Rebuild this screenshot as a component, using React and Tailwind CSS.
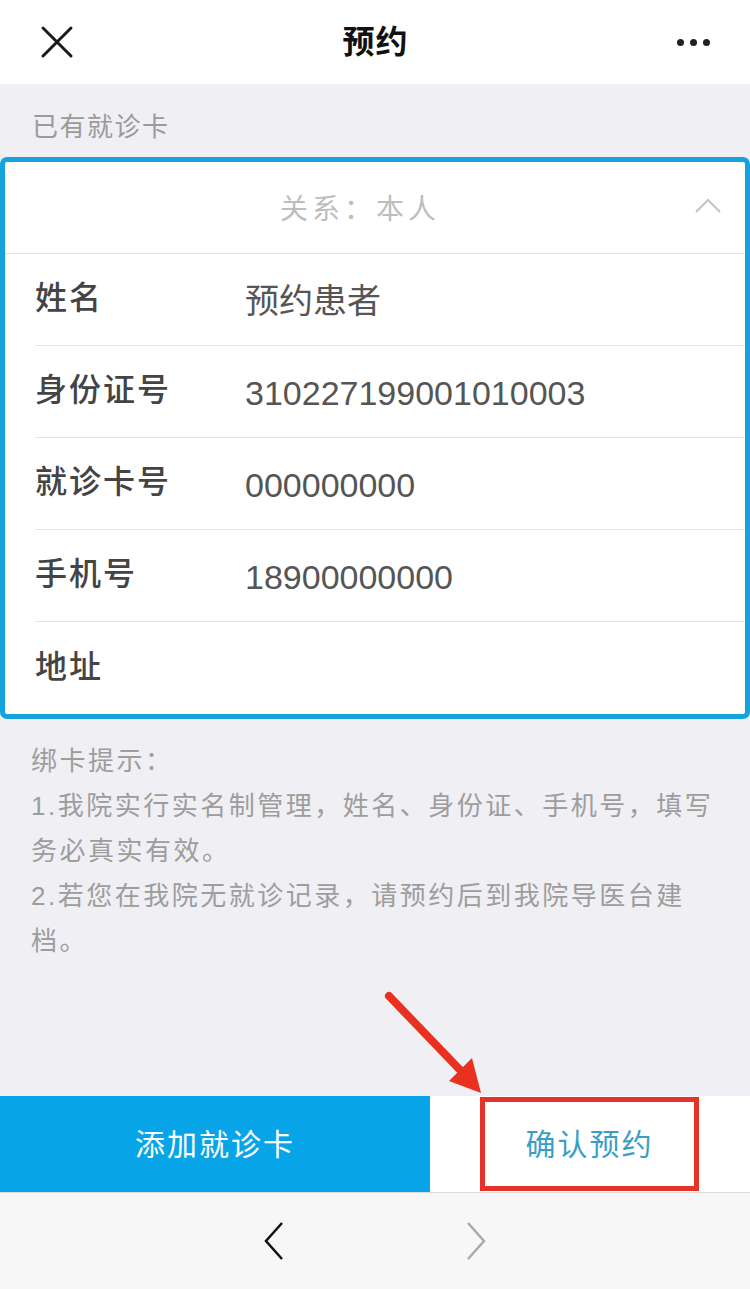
import React from "react";

const rows = [
  ["姓名", "预约患者"],
  ["身份证号", "310227199001010003"],
  ["就诊卡号", "000000000"],
  ["手机号", "18900000000"],
  ["地址", ""],
];

export default function App() {
  const font = { fontFamily: '"Liberation Sans", "Noto Sans CJK SC", sans-serif' };
  return (
    <div className="relative w-[750px] h-[1289px] flex flex-col bg-[#efeff4] overflow-hidden" style={font}>
      {/* header */}
      <div className="h-[84px] bg-white flex items-center justify-between px-[40px] shrink-0">
        <svg width="34" height="34" viewBox="0 0 34 34">
          <path d="M3 3 L31 31 M31 3 L3 31" stroke="#1a1a1a" strokeWidth="3" strokeLinecap="round" />
        </svg>
        <div className="text-[32px] font-bold text-[#111] tracking-[1px]">预约</div>
        <div className="flex gap-[6px] items-center">
          <span className="w-[7px] h-[7px] rounded-full bg-[#222]"></span>
          <span className="w-[7px] h-[7px] rounded-full bg-[#222]"></span>
          <span className="w-[7px] h-[7px] rounded-full bg-[#222]"></span>
        </div>
      </div>
      {/* label */}
      <div className="h-[73px] flex items-center px-[32px] pt-[14px] text-[26px] tracking-[1.5px] text-[#9a9a9a] shrink-0">已有就诊卡</div>
      {/* card */}
      <div className="border-[5px] border-[#16a3dc] rounded-[7px] bg-white shrink-0">
        <div className="h-[92px] relative flex items-center justify-center border-b border-[#e3e3e3]">
          <span className="text-[28px] tracking-[4px] text-[#bdbdbd] mr-[30px] mt-[5px]">关系：本人</span>
          <svg className="absolute right-[23px] top-[36px]" width="28" height="16" viewBox="0 0 28 16">
            <path d="M2 14 L14 2 L26 14" stroke="#c4c4c4" strokeWidth="2" fill="none" />
          </svg>
        </div>
        <div className="pl-[30px]">
          {rows.map(([k, v], i) => (
            <div
              key={k}
              className={`h-[92px] flex items-center ${i < rows.length - 1 ? "border-b border-[#e3e3e3]" : ""}`}
            >
              <div className="w-[210px] text-[32px] tracking-[2px] text-[#444] font-medium -mt-[3px]">{k}</div>
              <div className="text-[34px] text-[#555] mt-[4px]">{v}</div>
            </div>
          ))}
        </div>
      </div>
      {/* notes */}
      <div className="px-[31px] pt-[20px] text-[26px] tracking-[2.5px] leading-[45px] text-[#9d9d9d]">
        <div>绑卡提示：</div>
        <div>1.我院实行实名制管理，姓名、身份证、手机号，填写务必真实有效。</div>
        <div>2.若您在我院无就诊记录，请预约后到我院导医台建档。</div>
      </div>
      <div className="flex-1"></div>
      {/* bottom buttons */}
      <div className="h-[96px] flex shrink-0">
        <div className="w-[430px] bg-[#07a5e8] flex items-center justify-center text-[30px] tracking-[2px] text-white">添加就诊卡</div>
        <div className="flex-1 bg-white flex items-center">
          <div className="ml-[50px] w-[219px] h-[94px] border-[5px] border-[#e5332a] flex items-center justify-center text-[30px] tracking-[2px] text-[#3a9fc4]">
            确认预约
          </div>
        </div>
      </div>
      {/* bottom nav */}
      <div className="h-[97px] bg-[#f7f7f7] border-t border-[#dcdcdc] flex items-center justify-center gap-[180px] shrink-0">
        <svg width="22" height="40" viewBox="0 0 22 40">
          <path d="M19 2 L3 20 L19 38" stroke="#111" strokeWidth="2.5" fill="none" />
        </svg>
        <svg width="22" height="40" viewBox="0 0 22 40">
          <path d="M3 2 L19 20 L3 38" stroke="#aaa" strokeWidth="2.5" fill="none" />
        </svg>
      </div>
      {/* red arrow */}
      <svg className="absolute left-0 top-0 pointer-events-none" width="750" height="1289">
        <line x1="389" y1="996" x2="463" y2="1073" stroke="#e8321f" strokeWidth="8" strokeLinecap="round" />
        <polygon points="481,1093 449,1081 472,1058" fill="#e8321f" />
      </svg>
    </div>
  );
}
